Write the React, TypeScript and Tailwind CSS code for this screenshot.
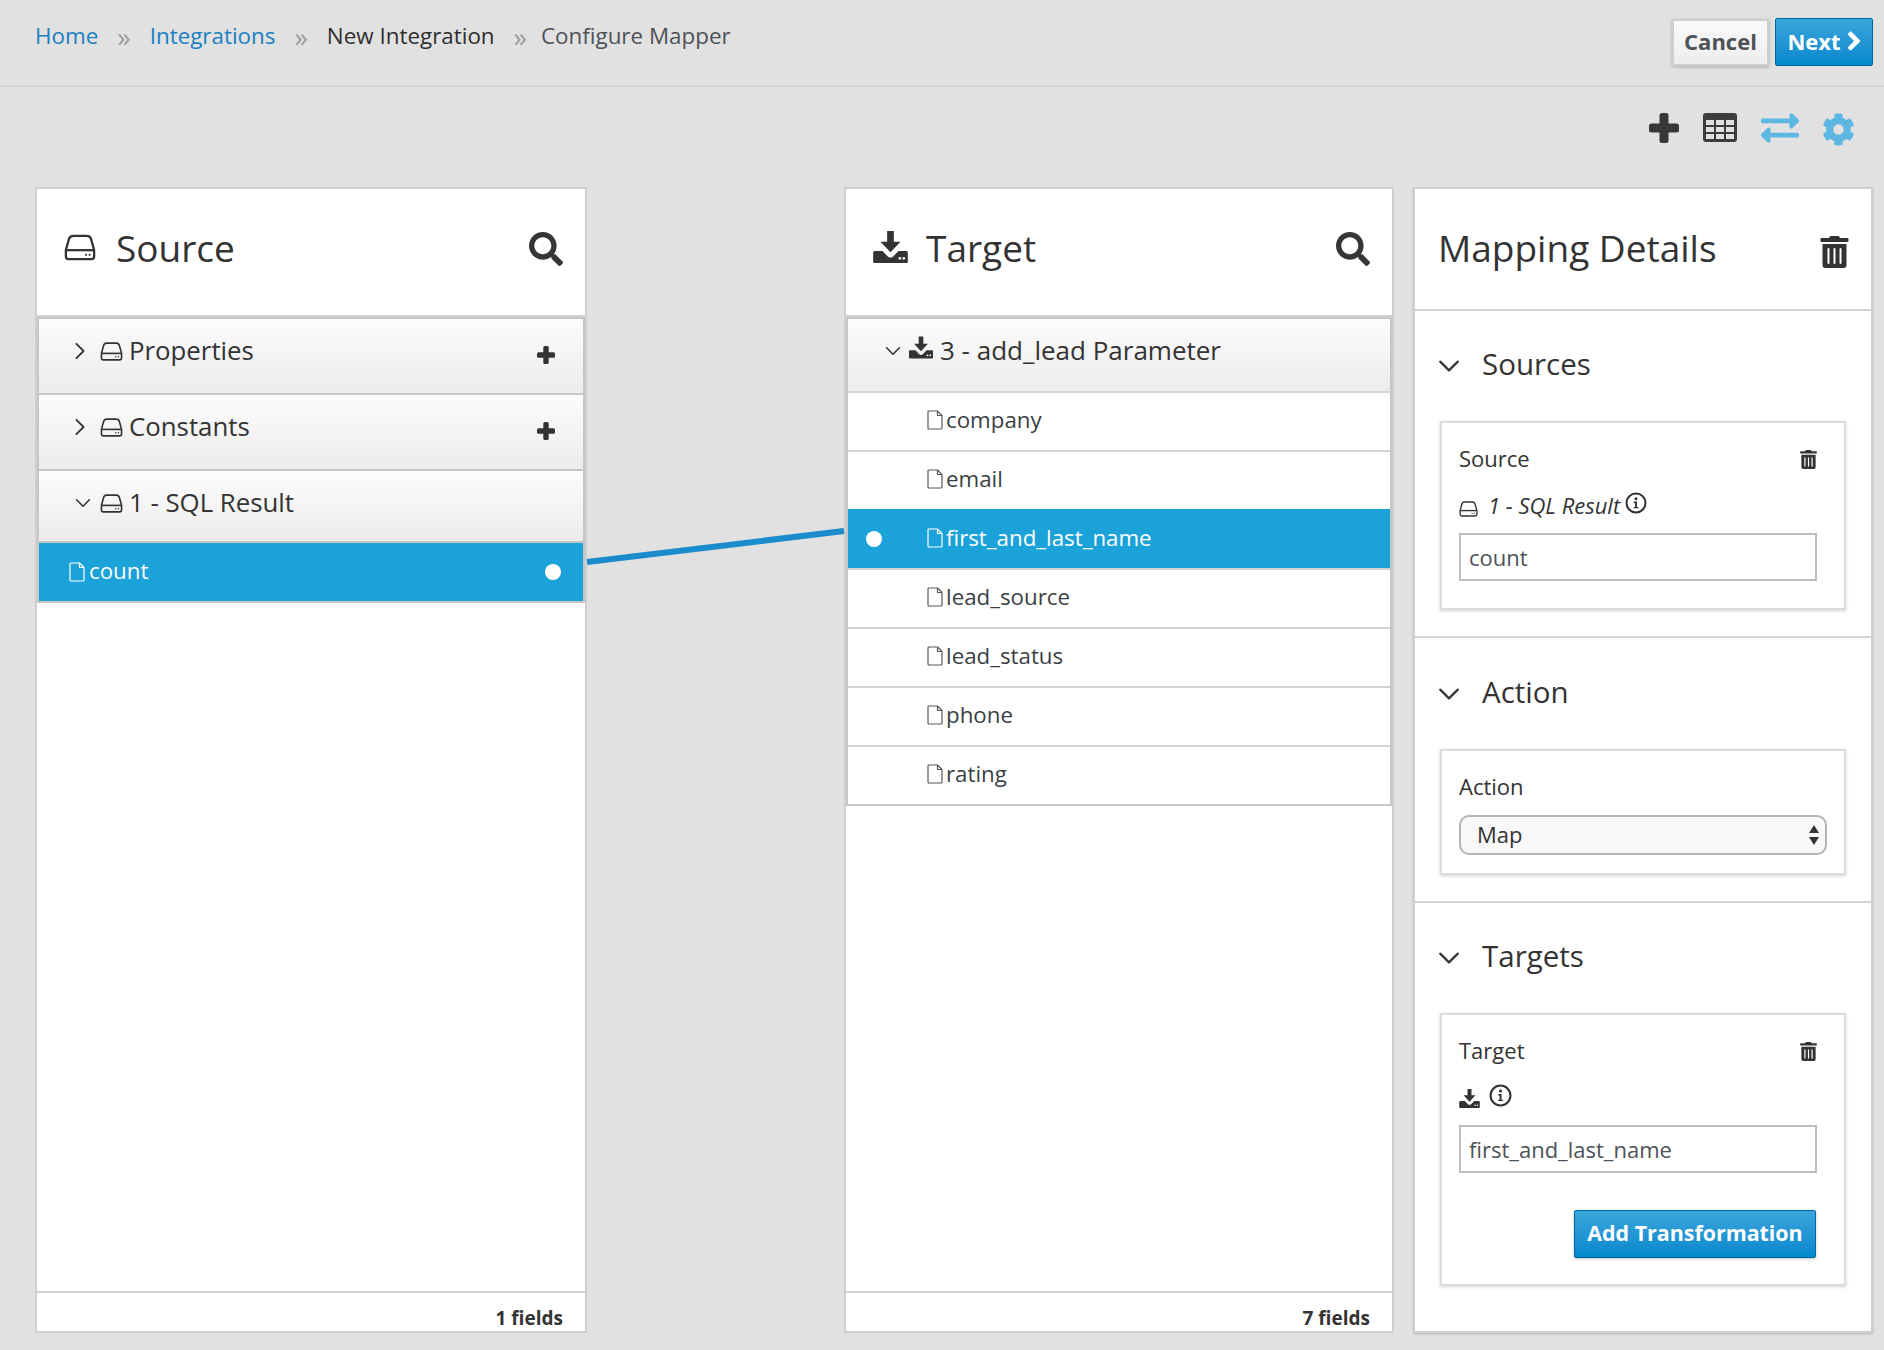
import React from "react";
import { FaSearch, FaExchangeAlt, FaCog, FaTrashAlt, FaAngleRight } from "react-icons/fa";

const Hdd = ({ className = "" }: { className?: string }) => (
  <svg viewBox="0 0 24 20" className={className} fill="none" stroke="currentColor" strokeWidth="1.7" strokeLinejoin="round">
    <path d="M7 1.200h10c1.800 0 2.900 1 3.300 2.500l2.300 8.300v4.600c0 1.200-.9 2.200-2.100 2.200H3.500c-1.200 0-2.100-1-2.100-2.200V12l2.300-8.300C4.100 2.200 5.200 1.200 7 1.200z" />
    <path d="M1.600 12h20.800" />
    <circle cx="16.500" cy="15.500" r="0.800" fill="currentColor" stroke="none" />
    <circle cx="19.200" cy="15.500" r="0.800" fill="currentColor" stroke="none" />
  </svg>
);

const Dl = ({ className = "" }: { className?: string }) => (
  <svg viewBox="0 0 26 24" className={className} fill="currentColor">
    <path d="M10.500 0h5v8h5l-7.500 8-7.500-8h5z" />
    <path fillRule="evenodd" d="M1.200 15H7l4 4.200c1.100 1.100 2.900 1.100 4 0l4-4.200h5.800c.7 0 1.200.5 1.200 1.200v6.600c0 .7-.5 1.200-1.200 1.200H1.200C.5 24 0 23.500 0 22.800v-6.600c0-.7.500-1.200 1.200-1.200z" />
    <circle cx="20" cy="20.500" r="1" fill="#fff" />
    <circle cx="23" cy="20.500" r="1" fill="#fff" />
  </svg>
);

const Info = ({ className = "" }: { className?: string }) => (
  <svg viewBox="0 0 22 22" className={className} fill="none" stroke="currentColor">
    <circle cx="11" cy="11" r="9.500" strokeWidth="2" />
    <circle cx="11" cy="6.700" r="1.500" fill="currentColor" stroke="none" />
    <path d="M8.800 9.600h3.200v5.400h1.500v1.300H8.800V15h1.300v-4.100H8.800z" fill="currentColor" stroke="none" />
  </svg>
);

const Chevron = ({ down, className = "" }: { down?: boolean; className?: string }) => (
  <svg viewBox="0 0 20 20" className={className} fill="none" stroke="currentColor" strokeWidth="2" strokeLinecap="round" strokeLinejoin="round">
    {down ? <path d="M2 6l8 8 8-8" /> : <path d="M6 2l8 8-8 8" />}
  </svg>
);

const Plus = ({ className = "" }: { className?: string }) => (
  <svg viewBox="0 0 30 30" className={className} fill="currentColor">
    <rect x="10.500" y="0" width="9" height="30" rx="2.500" />
    <rect x="0" y="10.500" width="30" height="9" rx="2.500" />
  </svg>
);

const Grid = ({ className = "" }: { className?: string }) => (
  <svg viewBox="0 0 34 29" className={className}>
    <rect width="34" height="29" rx="3" fill="#3c3c3c" />
    {[7, 14, 21].map((y) =>
      [3, 13, 23].map((x) => <rect key={`${x}-${y}`} x={x} y={y} width="8" height="5" fill="#e1e1e1" />)
    )}
  </svg>
);

const FileIcon = ({ className = "" }: { className?: string }) => (
  <svg viewBox="0 0 16 20" className={className} fill="none" stroke="currentColor" strokeWidth="1.200" strokeLinejoin="round">
    <path d="M1 2a1 1 0 0 1 1-1h8.500L15 5.500V18a1 1 0 0 1-1 1H2a1 1 0 0 1-1-1z" />
    <path d="M10.500 1v4.500H15" />
  </svg>
);

const Sep = ({ last }: { last?: boolean }) => (
  <span className={`text-[#9c9c9c] text-[27px] ml-[19px] leading-none ${last ? "mr-[14px]" : "mr-[19px]"}`}>»</span>
);

const PanelHeader = ({ icon, title }: { icon: React.ReactNode; title: string }) => (
  <div className="flex items-center shrink-0 h-[128px] pl-[27px] pr-[22px] pb-[10px] bg-white border-b-2 border-[#d2d2d2]">
    {icon}
    <h2 className="text-[37px] font-normal text-[#333] leading-none">{title}</h2>
    <FaSearch className="ml-auto mt-[3px] w-[34px] h-[34px] text-[#363636]" />
  </div>
);

const Group = ({ label, open, plus, h = "h-[76px]" }: { label: string; open?: boolean; plus?: boolean; h?: string }) => (
  <div className={`flex items-start ${h} pl-[33px] pr-[28px] pt-[15px] border-b-2 border-[#c6c6c6] bg-gradient-to-b from-[#fcfcfc] to-[#ececec] last:border-b-0`}>
    <div className="w-[28px] h-[33px] flex items-center">
      <Chevron down={open} className={open ? "w-[16px] h-[16px] ml-[3px] text-[#333]" : "w-[18px] h-[18px] -ml-[1px] text-[#333]"} />
    </div>
    <Hdd className="w-[23px] h-[19px] mt-[8px] text-[#333]" />
    <span className="ml-[6px] text-[25.800px] leading-[33px] text-[#333]">{label}</span>
    {plus && <Plus className="ml-auto mt-[12px] w-[18px] h-[18px] text-[#333]" />}
  </div>
);

const Field = ({ label, selected }: { label: string; selected?: boolean }) => (
  <div className={`flex items-center h-[59px] pl-[79px] pr-[20px] pb-[4px] border-t-2 first:border-t-0 relative ${selected ? "bg-[#1aa2d9] border-[#1aa2d9] text-white" : "bg-white border-[#d4d4d4] text-[#3a3f44]"}`}>
    {selected && <span className="absolute left-[18px] top-[20px] w-[16px] h-[16px] rounded-full bg-white" />}
    <FileIcon className={`w-[16px] h-[20px] ${selected ? "text-white" : "text-[#55595e]"}`} />
    <span className="ml-[3px] text-[22.300px]">{label}</span>
  </div>
);

const SectionTitle = ({ title }: { title: string }) => (
  <div className="flex items-center h-[40px]">
    <Chevron down className="w-[22px] h-[22px] -ml-[2px] mt-[4px] text-[#333]" />
    <h3 className="ml-[22px] text-[29.500px] font-normal text-[#333] leading-none">{title}</h3>
  </div>
);

const cardCls = "bg-white border-2 border-[#dcdcdc] shadow-[0_1px_3px_rgba(0,0,0,0.18)] w-[406px]";

export default function App() {
  return (
    <div className="w-[1884px] h-[1350px] overflow-hidden bg-[#e1e1e1] text-[#333]" style={{ fontFamily: '"Open Sans", sans-serif' }}>
      <header className="h-[87px] border-b-2 border-[#d4d4d4] flex justify-between pl-[35px] pr-[11px]">
        <nav className="flex items-center h-[72px] text-[22.400px]">
          <a className="text-[#1a80c4]">Home</a>
          <Sep />
          <a className="text-[#1a80c4]">Integrations</a>
          <Sep />
          <span className="text-[#2f2f2f]">New Integration</span>
          <Sep last />
          <span className="text-[#4d5258]">Configure Mapper</span>
        </nav>
        <div className="flex items-start gap-[6px] pt-[18px]">
          <button className="w-[97px] h-[47px] mt-[1px] pb-[2px] text-[22px] font-bold text-[#4d5258] border-2 border-[#cfcfcf] bg-gradient-to-b from-[#fafafa] to-[#ededed] shadow-[0_1px_3px_rgba(0,0,0,0.25)]">Cancel</button>
          <button className="w-[98px] h-[48px] pb-[2px] flex items-center justify-center text-[22px] font-bold text-white border border-[#00659c] rounded-[2px] bg-gradient-to-b from-[#39a5dc] to-[#0088ce]">
            Next<FaAngleRight className="w-[26px] h-[30px] -mr-[6px]" />
          </button>
        </div>
      </header>

      <div className="h-[100px] flex justify-end items-start pt-[26px] pr-[29px]">
        <Plus className="w-[30px] h-[30px] text-[#363636]" />
        <Grid className="w-[34px] h-[29px] ml-[24px]" />
        <FaExchangeAlt className="w-[38px] h-[38px] -mt-[4px] ml-[24px] text-[#5cb8e0]" />
        <FaCog className="w-[33px] h-[33px] ml-[23px] text-[#5cb8e0]" />
      </div>

      <main className="relative flex pl-[35px]">
        <section className="w-[552px] h-[1146px] flex flex-col bg-white border-2 border-[#cfcfcf]">
          <PanelHeader title="Source" icon={<Hdd className="w-[32px] h-[27px] mr-[20px] text-[#333]" />} />
          <div className="border-2 border-[#c6c6c6] bg-white">
            <Group label="Properties" plus />
            <Group label="Constants" plus />
            <Group label="1 - SQL Result" open h="h-[72px]" />
            <div className="relative flex items-center h-[58px] pl-[30px] bg-[#1aa2d9] text-white">
              <FileIcon className="w-[16px] h-[20px]" />
              <span className="ml-[4px] pb-[2px] text-[22.300px]">count</span>
              <span className="absolute right-[22px] w-[16px] h-[16px] rounded-full bg-white" />
            </div>
          </div>
          <div className="flex-1" />
          <div className="h-[40px] shrink-0 border-t-2 border-[#d2d2d2] flex items-center justify-end pr-[22px] pt-[12px] text-[19px] font-bold text-[#333]">1 fields</div>
        </section>

        <section className="ml-[257px] w-[550px] h-[1146px] flex flex-col bg-white border-2 border-[#cfcfcf]">
          <PanelHeader title="Target" icon={<Dl className="w-[35px] h-[32px] mr-[18px] text-[#333]" />} />
          <div className="border-2 border-[#c6c6c6] bg-white">
            <div className="flex items-start h-[72px] pl-[37px] pt-[15px] bg-gradient-to-b from-[#fcfcfc] to-[#ececec]">
              <div className="w-[24px] h-[33px] flex items-center">
                <Chevron down className="w-[16px] h-[16px] text-[#333]" />
              </div>
              <Dl className="w-[24px] h-[23px] mt-[2px] text-[#333]" />
              <span className="ml-[7px] text-[26px] leading-[33px] text-[#333]">3 - add_lead Parameter</span>
            </div>
            <Field label="company" />
            <Field label="email" />
            <Field label="first_and_last_name" selected />
            <Field label="lead_source" />
            <Field label="lead_status" />
            <Field label="phone" />
            <Field label="rating" />
          </div>
          <div className="flex-1" />
          <div className="h-[40px] shrink-0 border-t-2 border-[#d2d2d2] flex items-center justify-end pr-[22px] pt-[12px] text-[19px] font-bold text-[#333]">7 fields</div>
        </section>

        <section className="ml-[19px] w-[460px] h-[1146px] flex flex-col bg-white border-2 border-[#cfcfcf] shadow-[0_1px_2px_rgba(0,0,0,0.2)]">
          <div className="flex items-center h-[122px] shrink-0 pl-[23px] pr-[22px] pb-[4px] border-b-2 border-[#d2d2d2]">
            <h2 className="text-[37px] font-normal text-[#333] leading-none">Mapping Details</h2>
            <FaTrashAlt className="ml-auto mt-[10px] w-[29px] h-[32px] text-[#333]" />
          </div>

          <div className="h-[327px] shrink-0 pl-[25px] pt-[33px] border-b-2 border-[#d6d6d6]">
            <SectionTitle title="Sources" />
            <div className={`${cardCls} h-[189px] mt-[37px] pl-[17px] pt-[15px]`}>
              <div className="flex items-center justify-between w-[358px] h-[40px]">
                <span className="text-[22px]">Source</span>
                <FaTrashAlt className="w-[17px] h-[19px] mt-[2px] text-[#333]" />
              </div>
              <div className="flex items-start h-[36px] mt-[10px]">
                <Hdd className="w-[19px] h-[16px] mt-[13px] text-[#333]" />
                <em className="ml-[10px] text-[22px] leading-[34px]">1 - SQL Result</em>
                <Info className="ml-[5px] mt-[4px] w-[22px] h-[22px] text-[#333]" />
              </div>
              <input readOnly value="count" className="block w-[358px] h-[48px] mt-[9px] px-[8px] text-[22px] text-[#4d5258] border-2 border-[#bdbdbd] bg-white outline-none" />
            </div>
          </div>

          <div className="h-[265px] shrink-0 pl-[25px] pt-[34px] border-b-2 border-[#d6d6d6]">
            <SectionTitle title="Action" />
            <div className={`${cardCls} h-[126px] mt-[37px] pl-[17px] pt-[15px]`}>
              <div className="h-[40px] flex items-center text-[22px]">Action</div>
              <div className="flex items-center justify-between w-[368px] h-[40px] mt-[9px] pl-[16px] pr-[6px] pb-[1px] text-[22px] border-2 border-[#b4b4b4] rounded-[10px] bg-[#f8f8f8]">
                <span>Map</span>
                <svg viewBox="0 0 10 20" className="w-[10px] h-[20px] text-[#333]" fill="currentColor">
                  <path d="M5 0l5 8H0z" />
                  <path d="M5 20L0 12h10z" />
                </svg>
              </div>
            </div>
          </div>

          <div className="flex-1 pl-[25px] pt-[33px]">
            <SectionTitle title="Targets" />
            <div className={`${cardCls} h-[273px] mt-[37px] pl-[17px] pt-[15px]`}>
              <div className="flex items-center justify-between w-[358px] h-[40px]">
                <span className="text-[22px]">Target</span>
                <FaTrashAlt className="w-[17px] h-[19px] mt-[2px] text-[#333]" />
              </div>
              <div className="flex items-start h-[36px] mt-[10px]">
                <Dl className="w-[21px] h-[19px] mt-[9px] text-[#333]" />
                <Info className="ml-[9px] mt-[4px] w-[23px] h-[23px] text-[#333]" />
              </div>
              <input readOnly value="first_and_last_name" className="block w-[358px] h-[48px] mt-[9px] px-[8px] text-[22px] text-[#4d5258] border-2 border-[#bdbdbd] bg-white outline-none" />
              <div className="flex justify-end w-[357px] mt-[37px]">
                <button className="w-[242px] h-[48px] pb-[1px] text-[21.400px] font-bold text-white border border-[#00659c] rounded-[2px] bg-gradient-to-b from-[#39a5dc] to-[#0088ce] shadow-[0_1px_3px_rgba(0,0,0,0.25)]">Add Transformation</button>
              </div>
            </div>
          </div>
        </section>

        <svg className="absolute left-0 top-0 w-[1000px] h-[500px] pointer-events-none">
          <line x1="587" y1="375" x2="844" y2="344" stroke="#1a8ccb" strokeWidth="6" />
        </svg>
      </main>
    </div>
  );
}
